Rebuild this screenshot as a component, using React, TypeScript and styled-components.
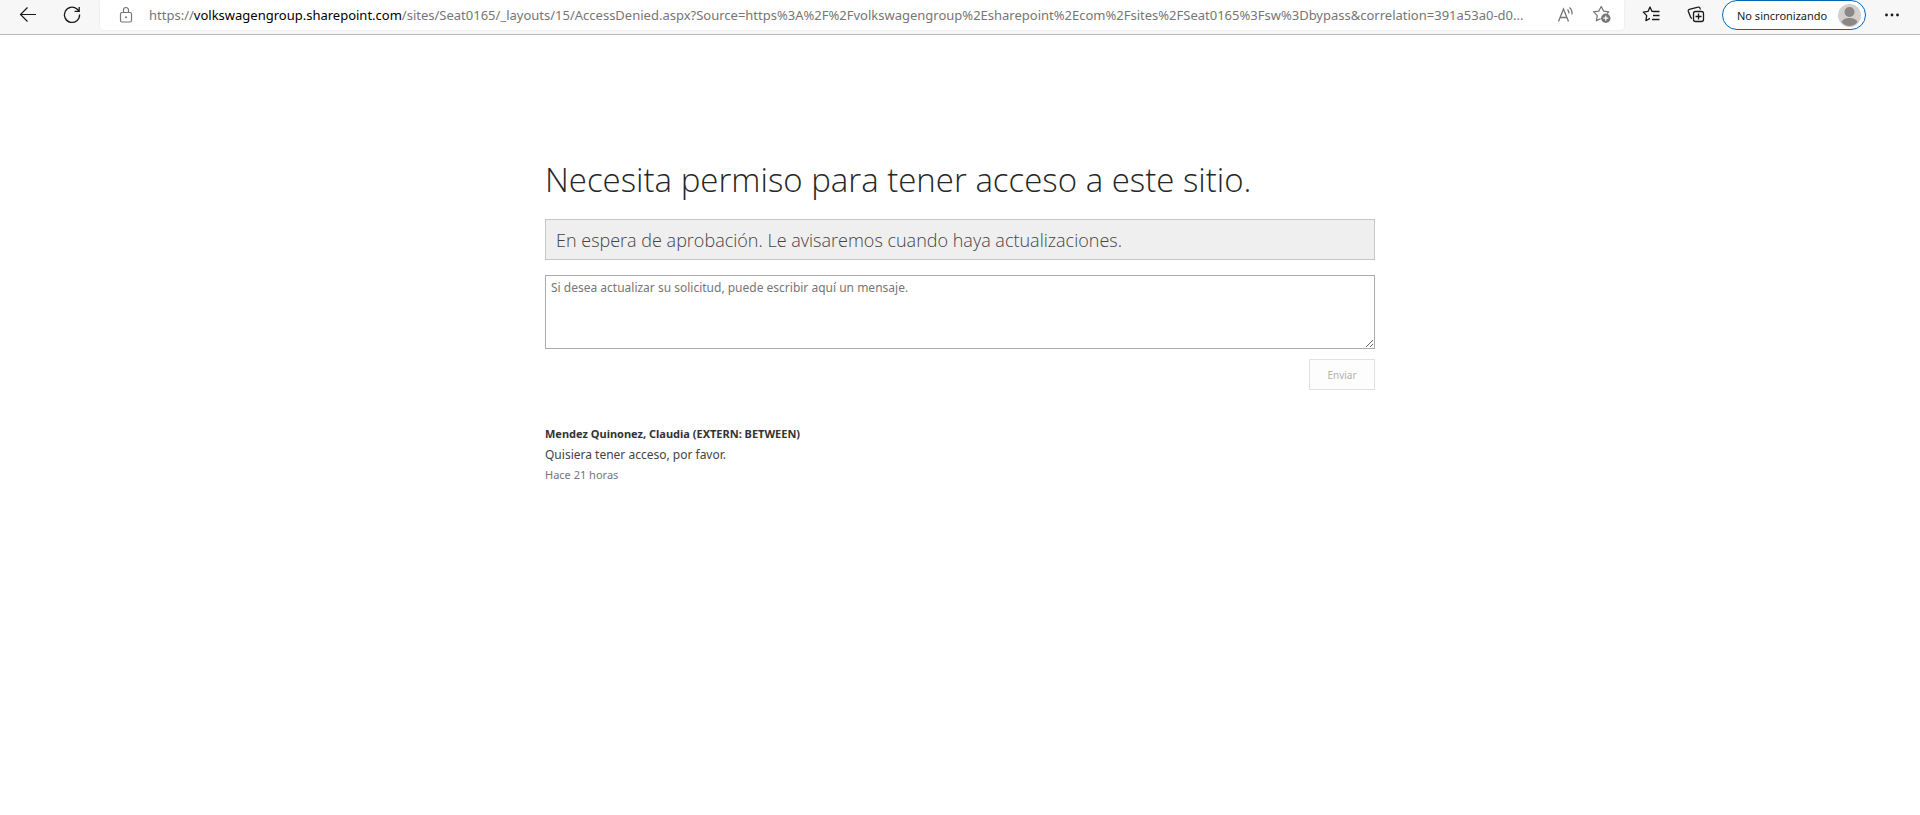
import React from "react";
import styled, { createGlobalStyle } from "styled-components";

const GlobalStyle = createGlobalStyle`
  *, *::before, *::after { box-sizing: border-box; }
  body {
    margin: 0;
    background: #fff;
    color: #333;
    font-family: "Segoe UI", "Noto Sans", sans-serif;
    font-size: 12px;
  }
  button, textarea { font-family: inherit; }
`;

const lightFont = `"Segoe UI Light", "Open Sans", "Noto Sans", sans-serif`;

const Toolbar = styled.header`
  display: flex;
  align-items: flex-start;
  height: 35px;
  padding-left: 10px;
  background: #f7f7f7;
  border-bottom: 1px solid #b9b9b6;
`;

const IconButton = styled.button<{ $width: number; $muted?: boolean }>`
  display: flex;
  align-items: center;
  justify-content: center;
  flex: none;
  width: ${(p) => p.$width}px;
  height: 30px;
  padding: 0;
  border: 0;
  background: transparent;
  color: ${(p) => (p.$muted ? "#767676" : "#1a1a1a")};
`;

const AddressBar = styled.div`
  display: flex;
  align-items: center;
  flex: 1;
  min-width: 0;
  height: 30px;
  margin-left: 2px;
  padding: 0 4px 0 8px;
  border-radius: 0 0 4px 4px;
  background: #fff;
  box-shadow: 0 0 3px rgba(0, 0, 0, 0.08);
`;

const Address = styled.div`
  flex: 1;
  min-width: 0;
  margin-left: 5px;
  overflow: hidden;
  white-space: nowrap;
  color: #767676;
  font-size: 13px;
  line-height: 30px;
`;

const Host = styled.span`
  color: #000;
`;

const ToolGroup = styled.nav`
  display: flex;
  flex: none;
  padding: 0 6px;
`;

const Profile = styled.button`
  display: flex;
  align-items: center;
  justify-content: space-between;
  width: 144px;
  height: 30px;
  margin: 0 4px;
  padding: 0 4px 0 14px;
  border: 1px solid #0067b8;
  border-radius: 15px;
  background: #fff;
  color: #1a1a1a;
  font-size: 11px;
`;

const Content = styled.main`
  max-width: 830px;
  margin: 0 auto;
  padding-top: 120px;
`;

const Title = styled.h1`
  margin: 0 0 14px;
  color: #262626;
  font-family: ${lightFont};
  font-size: 33px;
  font-weight: 300;
  line-height: 50px;
`;

const Notice = styled.p`
  margin: 0 0 15px;
  padding: 1px 10px 0;
  border: 1px solid #c6c6c6;
  background: #efefef;
  color: #444;
  font-family: ${lightFont};
  font-size: 18px;
  font-weight: 300;
  line-height: 38px;
`;

const Message = styled.textarea`
  display: block;
  width: 100%;
  height: 74px;
  padding: 3px 5px;
  border: 1px solid #ababab;
  background: #fff;
  color: #444;
  font-size: 12px;
  line-height: 18px;
  outline: none;
  &::placeholder { color: #767676; opacity: 1; }
`;

const Actions = styled.div`
  display: flex;
  justify-content: flex-end;
  margin: 10px 0 34px;
`;

const SendButton = styled.button`
  width: 66px;
  height: 31px;
  padding: 0;
  border: 1px solid #e1e1e1;
  background: #fdfdfd;
  color: #b1b1b1;
  font-size: 10px;
`;

const Author = styled.strong`
  display: block;
  font-size: 11px;
  font-weight: 700;
  line-height: 20px;
`;

const Comment = styled.p`
  margin: 0;
  color: #444;
  font-size: 12px;
  line-height: 21px;
`;

const Time = styled.time`
  display: block;
  color: #767676;
  font-size: 11px;
  line-height: 20px;
`;

const line = { fill: "none", stroke: "currentColor" } as const;

const BackIcon = () => (
  <svg width="20" height="20" viewBox="0 0 20 20" {...line} strokeWidth="1.2">
    <path d="M18 9.5H2.5M9.5 2.5l-7 7 7 7" />
  </svg>
);

const ReloadIcon = () => (
  <svg width="20" height="20" viewBox="0 0 20 20" {...line} strokeWidth="1.3">
    <path d="M17.6 9.5a7.6 7.6 0 1 1-2.6-5.4l2 2M17.2 2v4.4h-4.6" />
  </svg>
);

const LockIcon = () => (
  <svg width="16" height="18" viewBox="0 0 16 18" {...line} strokeWidth="1.2">
    <rect x="2.5" y="6.5" width="11" height="9.5" rx="1.5" />
    <path d="M5.5 6.5V4a2.5 2.5 0 0 1 5 0v2.5" />
    <circle cx="8" cy="11.2" r="1" fill="currentColor" stroke="none" />
  </svg>
);

const ReadAloudIcon = () => (
  <svg width="18" height="18" viewBox="0 0 18 18" {...line} strokeWidth="1.3">
    <path d="M1.5 15.5L6.5 3l5 12.5M3.3 11.5h6.5" />
    <path d="M10.5 3.5q1.5 1.5 1.5 4M12.5 1.5q3 2.5 2.5 7" />
  </svg>
);

const StarAddIcon = () => (
  <svg width="20" height="20" viewBox="0 0 20 20" {...line} strokeWidth="1.2">
    <path d="M15 8.5l1.8-1.7-5.1-.7L9.2 1.5 6.7 6.1l-5.1.7 3.7 3.8-.9 5.2 4.2-2.2" strokeLinejoin="round" />
    <circle cx="13.8" cy="13.2" r="4.7" fill="currentColor" stroke="none" />
    <path d="M13.8 10.7v5M11.3 13.2h5" stroke="#fff" />
  </svg>
);

const FavoritesIcon = () => (
  <svg width="20" height="20" viewBox="0 0 20 20" {...line} strokeWidth="1.3">
    <path d="M11.2 6.4H10L8 2 6 6.400l-4.700.7 3.400 3.500-.8 5.100 4.100-2.300" strokeLinejoin="round" />
    <path d="M11 6.5h6.5M11 10.5h6.5M10 14.5h7.5" />
  </svg>
);

const CollectionsIcon = () => (
  <svg width="20" height="20" viewBox="0 0 20 20" {...line} strokeWidth="1.3">
    <rect x="7.5" y="6.5" width="10" height="10" rx="2" />
    <path d="M12.5 8.5v6M9.5 11.5h6M14.5 4.5l-.5-1.3a1.5 1.5 0 0 0-1.9-1L3.3 4.3a1.5 1.5 0 0 0-1 1.9L4.5 12q.4 1 1.5 1.5" />
  </svg>
);

const AvatarIcon = () => (
  <svg width="23" height="23" viewBox="0 0 23 23">
    <circle cx="11.5" cy="11.5" r="11.5" fill="#d2d0ce" />
    <circle cx="11.5" cy="8" r="5" fill="#8a8886" />
    <path d="M3.5 18q2-4 8-4t8 4q-3.200 4-8 4t-8-4z" fill="#8a8886" />
  </svg>
);

const MoreIcon = () => (
  <svg width="16" height="16" viewBox="0 0 16 16" fill="currentColor">
    <circle cx="2.5" cy="8" r="1.4" />
    <circle cx="8" cy="8" r="1.4" />
    <circle cx="13.5" cy="8" r="1.4" />
  </svg>
);

export default function App() {
  return (
    <>
      <GlobalStyle />
      <Toolbar>
        <IconButton $width={36} aria-label="Atrás"><BackIcon /></IconButton>
        <IconButton $width={52} aria-label="Actualizar"><ReloadIcon /></IconButton>
        <AddressBar>
          <IconButton $width={36} $muted aria-label="Ver información del sitio"><LockIcon /></IconButton>
          <Address role="textbox" aria-label="Barra de direcciones" tabIndex={0}>
            https://<Host>volkswagengroup.sharepoint.com</Host>
            /sites/Seat0165/_layouts/15/AccessDenied.aspx?Source=https%3A%2F%2Fvolkswagengroup%2Esharepoint%2Ecom%2Fsites%2FSeat0165%3Fsw%3Dbypass&amp;correlation=391a53a0-d0...
          </Address>
          <IconButton $width={36} $muted aria-label="Leer en voz alta"><ReadAloudIcon /></IconButton>
          <IconButton $width={36} $muted aria-label="Agregar a favoritos"><StarAddIcon /></IconButton>
        </AddressBar>
        <ToolGroup>
          <IconButton $width={44} aria-label="Favoritos"><FavoritesIcon /></IconButton>
          <IconButton $width={44} aria-label="Colecciones"><CollectionsIcon /></IconButton>
          <Profile>No sincronizando<AvatarIcon /></Profile>
          <IconButton $width={44} aria-label="Configuración y más"><MoreIcon /></IconButton>
        </ToolGroup>
      </Toolbar>
      <Content>
        <Title>Necesita permiso para tener acceso a este sitio.</Title>
        <Notice>En espera de aprobación. Le avisaremos cuando haya actualizaciones.</Notice>
        <Message aria-label="Mensaje" placeholder="Si desea actualizar su solicitud, puede escribir aquí un mensaje." />
        <Actions>
          <SendButton disabled>Enviar</SendButton>
        </Actions>
        <article>
          <Author>Mendez Quinonez, Claudia (EXTERN: BETWEEN)</Author>
          <Comment>Quisiera tener acceso, por favor.</Comment>
          <Time>Hace 21 horas</Time>
        </article>
      </Content>
    </>
  );
}
